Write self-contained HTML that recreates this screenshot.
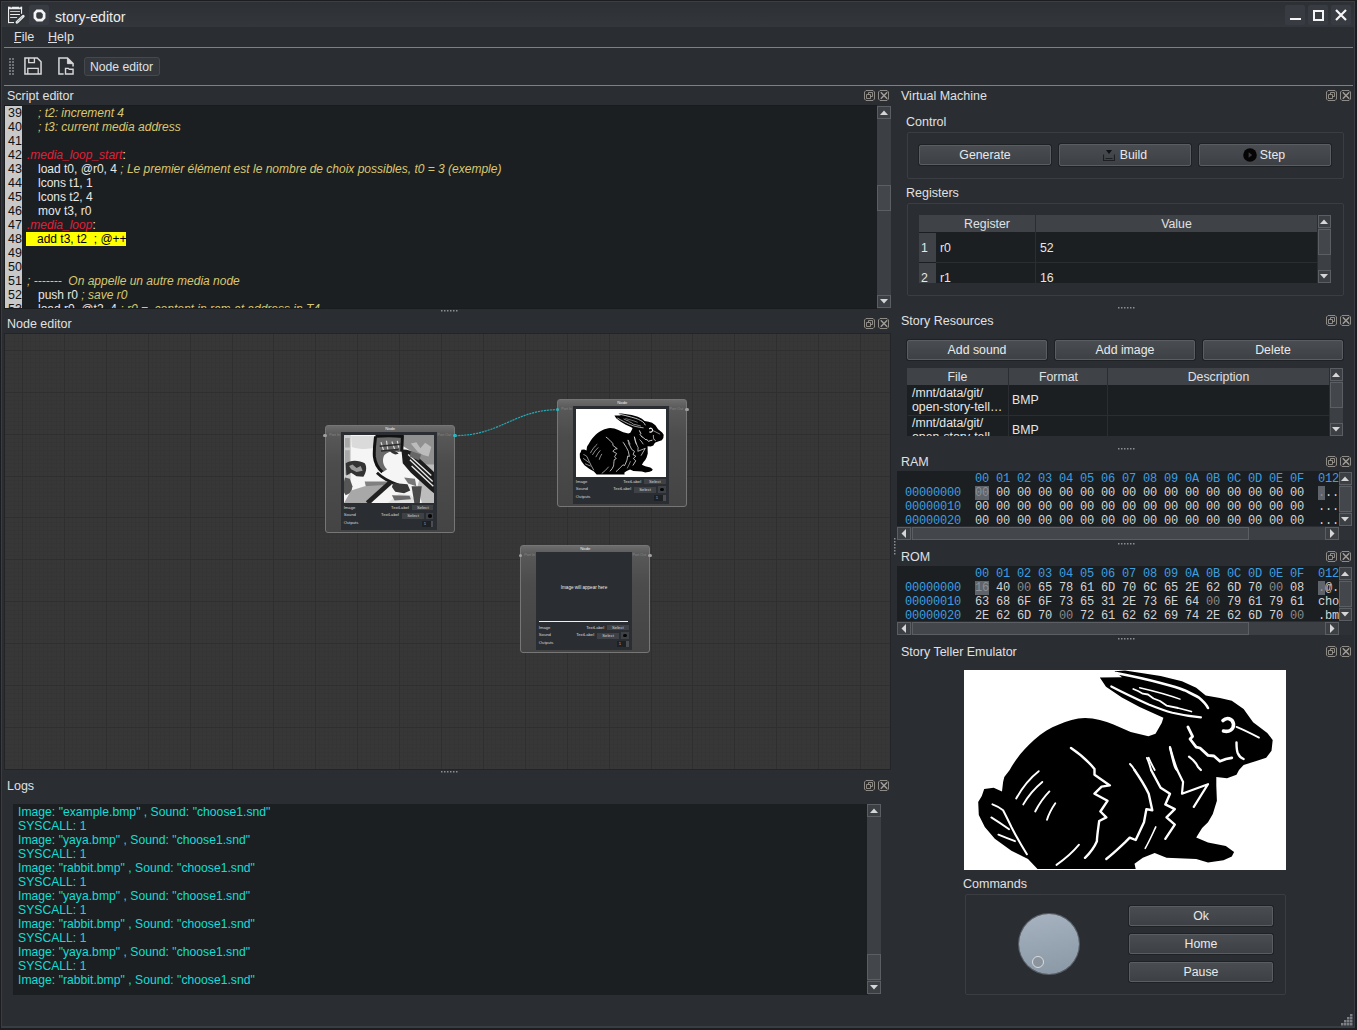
<!DOCTYPE html>
<html><head><meta charset="utf-8">
<style>
*{box-sizing:border-box;margin:0;padding:0}
html,body{width:1357px;height:1030px;overflow:hidden;background:#2a2d32}
body{position:relative;font-family:"Liberation Sans",sans-serif;font-size:13px;color:#e0e1e3}
.a{position:absolute}
.t{position:absolute;white-space:nowrap;line-height:1}
.sep{position:absolute;height:1px;background:#7d8185}
.ed{position:absolute;background:#1c1f21}
.grp{position:absolute;border:1px solid #3a3e43;border-radius:2px}
.dt{font-size:12.5px;color:#e0e1e3}
.code .t{font-size:12px;color:#e8e8e8;line-height:14px}
.code .g{font-size:12.5px;color:#111}
.c{font-style:italic;color:#d9c770}
.lb{font-style:italic;color:#e0203a}
.hl{background:#ffff00;color:#000;display:inline-block;width:100px;margin-left:-1px}
.lg{font-size:12.2px;color:#14dcd6;line-height:14px}
.btn{position:absolute;background:linear-gradient(#494d52,#3d4145);border:1px solid #5a5e63;box-shadow:0 0 0 1px #1f2225;border-radius:2px}
.bl{font-size:12.3px;color:#e8e9ea}
.th{background:#3f4348}
.hd{font-size:12.3px;color:#e0e1e3}
.cl{font-size:12.3px;color:#e6e7e8}
.hx{font-family:"Liberation Mono",monospace;font-size:12px;letter-spacing:-0.2px;color:#d4d4d4;line-height:14px}
.hb{color:#3d9ee0}
.dz{color:#8a8a8a}
.sel{background:#5f646a;color:#8a8f94}
.nd{border:1px solid #767676;border-radius:3px;background:linear-gradient(#6c6c6c 0,#585858 9px,#4c4c4c 35%,#444444 100%)}
.ndt{left:0;top:2.2px;width:130px;text-align:center;font-size:4.2px;color:#f0f0f0;line-height:1}
.nt{font-size:4.2px;color:#d8d8d8;line-height:1}
</style></head><body>
<div class="a" style="left:0;top:0;width:1357px;height:1030px;background:#1b1d20"></div>
<div class="a" style="left:1px;top:1px;width:1354px;height:1027px;background:#383d44"></div>
<div class="a" style="left:2px;top:2px;width:1352px;height:1024px;background:#2a2d32"></div>
<div class="a" style="left:2px;top:2px;width:1352px;height:25px;background:linear-gradient(#2d3136,#33373c)"></div>
<div class="a" style="left:1px;top:1px;width:1354px;height:1px;background:#3a3f46"></div>
<svg class="a" style="left:7px;top:6px" width="18" height="18" viewBox="0 0 18 18">
 <g fill="#ececec"><path d="M1 0.8h2.6v0.8h1.2V0.8h7.3v0.8h1.2V0.8H15.1v2.5H1z"/><rect x="1" y="0.8" width="1.1" height="16.3"/><rect x="1" y="16" width="6" height="1.1"/><rect x="14" y="0.8" width="1.1" height="7"/>
 <rect x="3.1" y="5.1" width="9.9" height="0.8"/><rect x="3.1" y="8" width="9.9" height="1"/><rect x="3.1" y="11.1" width="7" height="0.9"/></g>
 <path d="M10 16.2l6.2-6" stroke="#ececec" stroke-width="2.8" stroke-linecap="round"/>
 <path d="M10.6 15.6l5-4.8" stroke="#55595e" stroke-width="0.9" stroke-dasharray="0.8 0.6"/>
</svg>
<div class="a" style="left:29px;top:5px;width:20px;height:20px;background:#383c42;border-radius:2px"></div>
<svg class="a" style="left:33px;top:9px" width="13" height="13" viewBox="0 0 13 13">
 <path d="M4 1.9h4.5l2.6 2.6v4.3L8.8 11.1H4.2L1.9 8.8V4.2z" fill="none" stroke="#f4f4f4" stroke-width="2.7"/>
</svg>
<div class="t" style="left:55px;top:9.6px;font-size:14.1px;color:#eceded">story-editor</div>
<div class="a" style="left:1285px;top:5px;width:20px;height:20px;background:#383c42;border-radius:2px"></div>
<div class="a" style="left:1308px;top:5px;width:20px;height:20px;background:#383c42;border-radius:2px"></div>
<div class="a" style="left:1331px;top:5px;width:20px;height:20px;background:#383c42;border-radius:2px"></div>
<div class="a" style="left:1290px;top:18px;width:11px;height:2px;background:#f5f5f5"></div>
<div class="a" style="left:1313px;top:10px;width:11px;height:11px;border:2px solid #f5f5f5"></div>
<svg class="a" style="left:1335px;top:9px" width="12" height="12" viewBox="0 0 12 12"><path d="M1 1l10 10M11 1L1 11" stroke="#f5f5f5" stroke-width="2.2"/></svg>
<div class="t" style="left:14px;top:30.6px;font-size:12.6px">File</div>
<div class="a" style="left:14px;top:42px;width:7px;height:1px;background:#e0e1e3"></div>
<div class="t" style="left:48px;top:30.6px;font-size:12.6px">Help</div>
<div class="a" style="left:48px;top:42px;width:9px;height:1px;background:#e0e1e3"></div>
<div class="sep" style="left:4px;top:47px;width:1349px"></div>
<svg class="a" style="left:9px;top:58px" width="6" height="18" viewBox="0 0 6 18">
 <g fill="#6f7378"><rect x="0" y="0" width="2" height="2"/><rect x="3" y="0" width="2" height="2"/><rect x="0" y="3" width="2" height="2"/><rect x="3" y="3" width="2" height="2"/><rect x="0" y="6" width="2" height="2"/><rect x="3" y="6" width="2" height="2"/><rect x="0" y="9" width="2" height="2"/><rect x="3" y="9" width="2" height="2"/><rect x="0" y="12" width="2" height="2"/><rect x="3" y="12" width="2" height="2"/><rect x="0" y="15" width="2" height="2"/><rect x="3" y="15" width="2" height="2"/></g>
</svg>
<svg class="a" style="left:24px;top:57px" width="18" height="18" viewBox="0 0 19 19">
 <path d="M1 1h13l4 4v13H1z" fill="none" stroke="#d8d8d8" stroke-width="1.6"/>
 <path d="M5 1v5h6V1" fill="none" stroke="#d8d8d8" stroke-width="1.4"/>
 <path d="M4 18v-6h11v6" fill="none" stroke="#d8d8d8" stroke-width="1.4"/>
</svg>
<svg class="a" style="left:58px;top:57px" width="16" height="18" viewBox="0 0 17 19">
 <path d="M6 18H1V1h9l6 6v3" fill="none" stroke="#d8d8d8" stroke-width="1.6"/>
 <path d="M10 1v6h6" fill="#d8d8d8" stroke="#d8d8d8" stroke-width="1"/>
 <path d="M8 18v-6h3l1 1h4v5z" fill="none" stroke="#d8d8d8" stroke-width="1.5"/>
</svg>
<div class="a" style="left:84px;top:57px;width:76px;height:19px;background:#33373c;border:1px solid #45494e;border-radius:3px"></div>
<div class="t" style="left:90px;top:61px;font-size:12.2px">Node editor</div>
<div class="sep" style="left:4px;top:85px;width:1349px"></div>
<div class="t dt" style="left:7px;top:90px">Script editor</div>
<svg class="a" style="left:864px;top:90px" width="26" height="12" viewBox="0 0 26 12">
 <g fill="none" stroke="#a09c96" stroke-width="0.85"><path d="M2 .5h7l1.5 1.5v7L9 10.5H2L.5 9V2z"/><path d="M2.5 4.5H6.5V8.5H2.5Z"/><path d="M4.5 4.5V2.5H8.5V6.5H6.5"/></g>
 <g fill="none" stroke="#a09c96" stroke-width="0.85"><path d="M16 .5h7l1.5 1.5v7L23 10.5h-7L14.5 9V2z"/><path d="M16.8 2.3l6.4 6.4M23.2 2.3l-6.4 6.4" stroke-width="1.5"/></g>
</svg>
<div class="a" style="left:4px;top:105px;width:873px;height:204px;background:#191b1d"></div>
<div class="ed" style="left:5px;top:106px;width:872px;height:202px"></div>
<div class="a" style="left:5px;top:106px;width:17px;height:202px;background:#c9c9c9"></div>
<div class="a code" style="left:0;top:0;width:876px;height:308px;overflow:hidden;clip-path:inset(106px 0 0 0)">
<div class="t g" style="left:3px;top:106px;width:19px;text-align:right">39</div>
<div class="t g" style="left:3px;top:120px;width:19px;text-align:right">40</div>
<div class="t g" style="left:3px;top:134px;width:19px;text-align:right">41</div>
<div class="t g" style="left:3px;top:148px;width:19px;text-align:right">42</div>
<div class="t g" style="left:3px;top:162px;width:19px;text-align:right">43</div>
<div class="t g" style="left:3px;top:176px;width:19px;text-align:right">44</div>
<div class="t g" style="left:3px;top:190px;width:19px;text-align:right">45</div>
<div class="t g" style="left:3px;top:204px;width:19px;text-align:right">46</div>
<div class="t g" style="left:3px;top:218px;width:19px;text-align:right">47</div>
<div class="t g" style="left:3px;top:232px;width:19px;text-align:right">48</div>
<div class="t g" style="left:3px;top:246px;width:19px;text-align:right">49</div>
<div class="t g" style="left:3px;top:260px;width:19px;text-align:right">50</div>
<div class="t g" style="left:3px;top:274px;width:19px;text-align:right">51</div>
<div class="t g" style="left:3px;top:288px;width:19px;text-align:right">52</div>
<div class="t g" style="left:3px;top:302px;width:19px;text-align:right">53</div>
<div class="t" style="left:27px;top:106px"><span class="c" style="margin-left:11px">; t2: increment 4</span></div>
<div class="t" style="left:27px;top:120px"><span class="c" style="margin-left:11px">; t3: current media address</span></div>
<div class="t" style="left:27px;top:134px"></div>
<div class="t" style="left:27px;top:148px"><span class="lb">.media_loop_start</span>:</div>
<div class="t" style="left:27px;top:162px"><span style="margin-left:11px">load t0, @r0, 4 </span><span class="c">; Le premier élément est le nombre de choix possibles, t0 = 3 (exemple)</span></div>
<div class="t" style="left:27px;top:176px"><span style="margin-left:11px">lcons t1, 1</span></div>
<div class="t" style="left:27px;top:190px"><span style="margin-left:11px">lcons t2, 4</span></div>
<div class="t" style="left:27px;top:204px"><span style="margin-left:11px">mov t3, r0</span></div>
<div class="t" style="left:27px;top:218px"><span class="lb">.media_loop</span>:</div>
<div class="t" style="left:27px;top:232px"><span class="hl"><span style="margin-left:11px">add t3, t2&nbsp; ; @++</span></span></div>
<div class="t" style="left:27px;top:246px"></div>
<div class="t" style="left:27px;top:260px"></div>
<div class="t" style="left:27px;top:274px"><span class="c">; -------&nbsp; On appelle un autre media node</span></div>
<div class="t" style="left:27px;top:288px"><span style="margin-left:11px">push r0 </span><span class="c">; save r0</span></div>
<div class="t" style="left:27px;top:302px"><span style="margin-left:11px">load r0, @t2, 4 </span><span class="c">; r0 =&nbsp; content in ram at address in T4</span></div>

</div>
<div class="a" style="left:877px;top:106px;width:14px;height:202px;background:#3c4045"></div>
<div class="a" style="left:877px;top:106px;width:14px;height:13px;background:#3c4045;border:1px solid #5b5f64"></div>
<svg class="a" style="left:880px;top:110px" width="8" height="5"><path d="M0 5L4 0.5L8 5z" fill="#d6d6d6"/></svg>
<div class="a" style="left:877px;top:295px;width:14px;height:13px;background:#3c4045;border:1px solid #5b5f64"></div>
<svg class="a" style="left:880px;top:299px" width="8" height="5"><path d="M0 0L4 4.5L8 0z" fill="#d6d6d6"/></svg>
<div class="a" style="left:877px;top:185px;width:14px;height:26px;background:#43474c;border:1px solid #5b5f64"></div>
<svg class="a" style="left:441px;top:310px" width="17" height="2"><g fill="#8a8e92"><rect x="0" width="1.5" height="1.5"/><rect x="3" width="1.5" height="1.5"/><rect x="6" width="1.5" height="1.5"/><rect x="9" width="1.5" height="1.5"/><rect x="12" width="1.5" height="1.5"/><rect x="15" width="1.5" height="1.5"/></g></svg>
<div class="t dt" style="left:7px;top:318px">Node editor</div>
<svg class="a" style="left:864px;top:318px" width="26" height="12" viewBox="0 0 26 12">
 <g fill="none" stroke="#a09c96" stroke-width="0.85"><path d="M2 .5h7l1.5 1.5v7L9 10.5H2L.5 9V2z"/><path d="M2.5 4.5H6.5V8.5H2.5Z"/><path d="M4.5 4.5V2.5H8.5V6.5H6.5"/></g>
 <g fill="none" stroke="#a09c96" stroke-width="0.85"><path d="M16 .5h7l1.5 1.5v7L23 10.5h-7L14.5 9V2z"/><path d="M16.8 2.3l6.4 6.4M23.2 2.3l-6.4 6.4" stroke-width="1.5"/></g>
</svg>
<div class="a" style="left:4px;top:333px;width:887px;height:437px;background:#222427"></div>
<svg class="a" style="left:5px;top:334px" width="885" height="435">
<rect width="885" height="435" fill="#373737"/>
<path d="M9.5 0V435M13.5 0V435M21.5 0V435M25.5 0V435M30.5 0V435M34.5 0V435M38.5 0V435M42.5 0V435M46.5 0V435M51.5 0V435M55.5 0V435M63.5 0V435M67.5 0V435M71.5 0V435M76.5 0V435M80.5 0V435M84.5 0V435M88.5 0V435M92.5 0V435M97.5 0V435M105.5 0V435M109.5 0V435M113.5 0V435M118.5 0V435M122.5 0V435M126.5 0V435M130.5 0V435M134.5 0V435M139.5 0V435M147.5 0V435M151.5 0V435M155.5 0V435M159.5 0V435M164.5 0V435M168.5 0V435M172.5 0V435M176.5 0V435M180.5 0V435M189.5 0V435M193.5 0V435M197.5 0V435M201.5 0V435M206.5 0V435M210.5 0V435M214.5 0V435M218.5 0V435M222.5 0V435M231.5 0V435M235.5 0V435M239.5 0V435M243.5 0V435M247.5 0V435M252.5 0V435M256.5 0V435M260.5 0V435M264.5 0V435M273.5 0V435M277.5 0V435M281.5 0V435M285.5 0V435M289.5 0V435M294.5 0V435M298.5 0V435M302.5 0V435M306.5 0V435M314.5 0V435M319.5 0V435M323.5 0V435M327.5 0V435M331.5 0V435M335.5 0V435M340.5 0V435M344.5 0V435M348.5 0V435M356.5 0V435M361.5 0V435M365.5 0V435M369.5 0V435M373.5 0V435M377.5 0V435M382.5 0V435M386.5 0V435M390.5 0V435M398.5 0V435M402.5 0V435M407.5 0V435M411.5 0V435M415.5 0V435M419.5 0V435M423.5 0V435M428.5 0V435M432.5 0V435M440.5 0V435M444.5 0V435M449.5 0V435M453.5 0V435M457.5 0V435M461.5 0V435M465.5 0V435M470.5 0V435M474.5 0V435M482.5 0V435M486.5 0V435M490.5 0V435M495.5 0V435M499.5 0V435M503.5 0V435M507.5 0V435M511.5 0V435M516.5 0V435M524.5 0V435M528.5 0V435M532.5 0V435M537.5 0V435M541.5 0V435M545.5 0V435M549.5 0V435M553.5 0V435M558.5 0V435M566.5 0V435M570.5 0V435M574.5 0V435M578.5 0V435M583.5 0V435M587.5 0V435M591.5 0V435M595.5 0V435M599.5 0V435M608.5 0V435M612.5 0V435M616.5 0V435M620.5 0V435M625.5 0V435M629.5 0V435M633.5 0V435M637.5 0V435M641.5 0V435M650.5 0V435M654.5 0V435M658.5 0V435M662.5 0V435M666.5 0V435M671.5 0V435M675.5 0V435M679.5 0V435M683.5 0V435M692.5 0V435M696.5 0V435M700.5 0V435M704.5 0V435M708.5 0V435M713.5 0V435M717.5 0V435M721.5 0V435M725.5 0V435M733.5 0V435M738.5 0V435M742.5 0V435M746.5 0V435M750.5 0V435M754.5 0V435M759.5 0V435M763.5 0V435M767.5 0V435M775.5 0V435M780.5 0V435M784.5 0V435M788.5 0V435M792.5 0V435M796.5 0V435M801.5 0V435M805.5 0V435M809.5 0V435M817.5 0V435M821.5 0V435M826.5 0V435M830.5 0V435M834.5 0V435M838.5 0V435M842.5 0V435M847.5 0V435M851.5 0V435M859.5 0V435M863.5 0V435M868.5 0V435M872.5 0V435M876.5 0V435M880.5 0V435M884.5 0V435M0 7.5H885M0 12.5H885M0 20.5H885M0 24.5H885M0 28.5H885M0 33.5H885M0 37.5H885M0 41.5H885M0 45.5H885M0 49.5H885M0 54.5H885M0 62.5H885M0 66.5H885M0 70.5H885M0 74.5H885M0 79.5H885M0 83.5H885M0 87.5H885M0 91.5H885M0 95.5H885M0 104.5H885M0 108.5H885M0 112.5H885M0 116.5H885M0 121.5H885M0 125.5H885M0 129.5H885M0 133.5H885M0 137.5H885M0 146.5H885M0 150.5H885M0 154.5H885M0 158.5H885M0 162.5H885M0 167.5H885M0 171.5H885M0 175.5H885M0 179.5H885M0 188.5H885M0 192.5H885M0 196.5H885M0 200.5H885M0 204.5H885M0 209.5H885M0 213.5H885M0 217.5H885M0 221.5H885M0 229.5H885M0 234.5H885M0 238.5H885M0 242.5H885M0 246.5H885M0 250.5H885M0 255.5H885M0 259.5H885M0 263.5H885M0 271.5H885M0 276.5H885M0 280.5H885M0 284.5H885M0 288.5H885M0 292.5H885M0 297.5H885M0 301.5H885M0 305.5H885M0 313.5H885M0 317.5H885M0 322.5H885M0 326.5H885M0 330.5H885M0 334.5H885M0 338.5H885M0 343.5H885M0 347.5H885M0 355.5H885M0 359.5H885M0 364.5H885M0 368.5H885M0 372.5H885M0 376.5H885M0 380.5H885M0 385.5H885M0 389.5H885M0 397.5H885M0 401.5H885M0 405.5H885M0 410.5H885M0 414.5H885M0 418.5H885M0 422.5H885M0 426.5H885M0 431.5H885" stroke="#353535" stroke-width="1" fill="none"/>
<path d="M17.5 0V435M59.5 0V435M101.5 0V435M143.5 0V435M185.5 0V435M227.5 0V435M268.5 0V435M310.5 0V435M352.5 0V435M394.5 0V435M436.5 0V435M478.5 0V435M520.5 0V435M562.5 0V435M604.5 0V435M646.5 0V435M687.5 0V435M729.5 0V435M771.5 0V435M813.5 0V435M855.5 0V435M0 16.5H885M0 58.5H885M0 100.5H885M0 142.5H885M0 183.5H885M0 225.5H885M0 267.5H885M0 309.5H885M0 351.5H885M0 393.5H885" stroke="#2f2f2f" stroke-width="1" fill="none"/>
</svg>
<div class="a" style="left:325.2px;top:425.2px;width:130px;height:108px">
<div class="a nd" style="left:0;top:0;width:130px;height:108px"></div>
<div class="t ndt">Node</div>
<div class="a" style="left:16px;top:7px;width:96px;height:98px;background:#2a2d32"></div>
<div class="a" style="left:18.7px;top:9.7px;width:90px;height:68px;overflow:hidden"><svg class="a" style="left:0;top:0" width="90" height="68" viewBox="15 15 1325 1000" preserveAspectRatio="none">
<rect x="0" y="0" width="1354" height="1030" fill="#f5f5f5"/>
<path d="M15 15H115V720L15 760Z" fill="#cdcdcd"/>
<path d="M30 60H100V200H30ZM30 240H100V600H30Z" fill="#a8a8a8"/>
<path d="M120 30H470L460 200C380 230 250 230 130 190Z" fill="#dadada"/>
<path d="M880 15H1340V470L1200 450 1000 250 870 170Z" fill="#909090"/>
<path d="M950 80L1000 140 1080 120 1140 210 1210 130 1300 190 1260 330 1180 310 1100 260Z" fill="#bcbcbc"/>
<path d="M1180 450H1340V1015H1160L1100 760Z" fill="#bdbdbd"/>
<path d="M480 30C600 18 760 18 880 35L870 250 820 265C740 240 660 260 610 310C570 380 590 470 650 520L590 560C520 500 480 420 465 330C455 230 455 120 480 30Z" fill="#6a6a6a"/>
<path d="M480 35C470 120 455 220 462 330C470 420 510 500 580 560M480 35C600 22 760 22 875 38L865 260" stroke="#111" stroke-width="44" fill="none"/>
<path d="M560 120L600 250M640 100L660 230M720 110L760 220M800 100L820 200" stroke="#d8d8d8" stroke-width="18" fill="none"/>
<path d="M540 180L850 150M560 250L820 230" stroke="#2a2a2a" stroke-width="22" fill="none"/>
<path d="M690 245C740 240 790 255 820 290L770 300C730 290 705 270 690 245Z" fill="#333"/>
<path d="M860 230C930 220 1000 240 1040 280L1340 560V870L1290 830 1000 570 880 430Z" fill="#1c1c1c"/>
<path d="M960 300L1300 610M985 380L1320 700M1010 470L1330 770" stroke="#e8e8e8" stroke-width="20" fill="none"/>
<path d="M1000 250L1150 300 1120 390 980 330Z" fill="#666"/>
<path d="M500 570C580 650 700 710 820 750" stroke="#1a1a1a" stroke-width="40" fill="none"/>
<path d="M40 430C100 380 240 380 320 430C360 490 340 570 300 630L200 620 120 570 50 610Z" fill="#333"/>
<path d="M90 470L140 450 200 500 260 470 290 540 200 560 120 520Z" fill="#999"/>
<path d="M30 640L100 660 140 770 120 860 40 900 15 860V700Z" fill="#555"/>
<path d="M320 700H640L700 760 520 790 340 790Z" fill="#808080"/>
<path d="M15 1015L120 830 320 770 600 750 420 1015Z" fill="#a8a8a8"/>
<path d="M360 1015L700 710" stroke="#222" stroke-width="70" fill="none"/>
<path d="M740 720L950 740 990 830 900 870 770 850 720 780Z" fill="#383838"/>
<path d="M660 1015L820 880 1000 900 1100 1015Z" fill="#e0e0e0"/>
<path d="M720 900L980 910 1000 960 760 980Z" fill="#6a6a6a"/>
<path d="M900 640L1060 660 1080 770 960 730Z" fill="#777"/>
<path d="M1010 770L1160 770 1130 1015H1050Z" fill="#4a4a4a"/>
</svg></div>
<div class="t nt" style="left:4px;top:8.8px;color:#888;font-size:3.7px">Port In</div>
<div class="t nt" style="right:4px;top:8.8px;color:#888;font-size:3.7px">Port Out</div>
<div class="t nt" style="left:18.5px;top:80.5px">Image</div>
<div class="t nt" style="right:46.2px;top:80.8px">TextLabel</div>
<div class="a" style="left:86.8px;top:79.8px;width:21.5px;height:5.3px;background:#3e4247"></div>
<div class="t nt" style="left:86.8px;top:80.5px;width:21.5px;text-align:center">Select</div>
<div class="t nt" style="left:18.5px;top:87.5px">Sound</div>
<div class="t nt" style="right:56.2px;top:88.2px">TextLabel</div>
<div class="a" style="left:76.8px;top:87.6px;width:22px;height:6px;background:#3e4247"></div>
<div class="t nt" style="left:76.8px;top:88.6px;width:22px;text-align:center">Select</div>
<div class="a" style="left:100.8px;top:87.4px;width:7.5px;height:6.4px;background:#3e4247"></div>
<div class="a" style="left:102.8px;top:89px;width:3.6px;height:3.4px;border-radius:50%;background:#050505"></div>
<div class="t nt" style="left:18.5px;top:96.3px">Outputs</div>
<div class="a" style="left:97.1px;top:95.5px;width:11.2px;height:6.3px;background:#1e2124"></div>
<div class="t nt" style="left:98.5px;top:96.8px;color:#aaa">1</div>
<div class="a" style="left:105.5px;top:95.5px;width:2.8px;height:6.3px;background:#4a4e53"></div>
<div class="a" style="left:-1.8px;top:8.6px;width:3.6px;height:3.6px;border-radius:50%;background:#a0a0a0"></div>
<div class="a" style="left:128.2px;top:8.6px;width:3.6px;height:3.6px;border-radius:50%;background:#2ac0c8"></div>
</div><div class="a" style="left:557.3px;top:399.1px;width:130px;height:108px">
<div class="a nd" style="left:0;top:0;width:130px;height:108px"></div>
<div class="t ndt">Node</div>
<div class="a" style="left:16px;top:7px;width:96px;height:98px;background:#2a2d32"></div>
<div class="a" style="left:18.7px;top:9.7px;width:90px;height:68px;overflow:hidden"><div class="a" style="left:0;top:0;width:90px;height:68px;background:#fff"></div><svg class="a" style="left:0;top:0" width="90" height="68" viewBox="0 0 90 68"><g transform="translate(-0.3,4.2) scale(0.285,0.308)"><path d="M73.5 199 L64 189 L47.4 180.7 L30.8 168.8 L20.8 157 L14.8 145 L14.2 132 L17.8 126 L20.2 119 L29.7 117.8 L38 121.4 L39.1 112 L40.3 107 L45.7 100
C53 87 61 78 70 70 C78 63 86 58 94.9 54.6 C103 51 112 48.2 121 48 C131 48 141 51 149.5 54.6 L166.7 61.9 L184.4 66.3 L191.5 63.7 L197.7 53 L199.4 47.7
L193.3 45.1 L175.6 37.1 L157.9 27.4 L142 16.8 L135.8 7.5 L158 7.3 L150.5 1.3 L161 0.6 L196.6 5.9 L218 11.3 L232.2 17.8 L241.7 25.5
L255.9 27.9 L267.8 30.8 L279.6 39.1 L289.1 52.2 L303.3 62.9 L308.7 70 L307.5 80.7 L302.2 87.8 L291.5 91.3 L279.6 94.9 L275 100 L272.5 104.7 L263 108.3 L252.3 107.1
L252.3 115.4 L252.9 130.8 L248.8 143.9 L244 152.2 L238.1 158.1 L232.2 167.6 L244 172.4 L261.8 175.9 L270.1 181.9 L267.8 186.6 L259.5 190.2 L244 192.5 L232.2 189 L202.5 187.8 L190.7 183 L178.8 187.8 L170.5 193.7 L171.7 199 Z" fill="#000"/><path d="M152 3 C165 5.5 182 9 196.6 13 C208 16 215 18 220.3 20.2 C226 23 231 25 234.5 27.3 C239 31 242 34 244 38" fill="none" stroke="#fff" stroke-width="2.6" stroke-linecap="round" stroke-linejoin="round"/><path d="M147.3 16.4 C160 23 175 30 184.7 34.4 C195 38.5 202 41 208.4 42.7 C220 45.5 228 46.5 236.9 47.4" fill="none" stroke="#fff" stroke-width="2.2" stroke-linecap="round" stroke-linejoin="round"/><path d="M169.3 19 L174 21 L178.8 23.7 L184 24.5 L189.5 28.5 L196 31 L202.5 35.6 L214 38 L227.4 41.5" fill="none" stroke="#fff" stroke-width="1.8" stroke-linecap="round" stroke-linejoin="round"/><path d="M175.6 17.7 C190 21 205 25 216 29.2" fill="none" stroke="#fff" stroke-width="1.4" stroke-linecap="round" stroke-linejoin="round"/><path d="M259 50.5 C262.5 47 268.5 48 269.5 54 C270 59.5 265 62.5 259.5 61" fill="none" stroke="#fff" stroke-width="3.6" stroke-linecap="round" stroke-linejoin="round"/><path d="M272.5 56.9 C280 60 288 64 295 67.6" fill="none" stroke="#fff" stroke-width="1.8" stroke-linecap="round" stroke-linejoin="round"/><path d="M272.5 72.4 C272.5 77 273 81 273.7 83 C275 86 277 88 279.6 89" fill="none" stroke="#fff" stroke-width="2.4" stroke-linecap="round" stroke-linejoin="round"/><path d="M223.9 56.9 L228.6 66.4 L226 69 L232.2 77.1 L236 78 L244 85.4 L250 86 L255.9 91.3 L262 89 L267.8 87.8" fill="none" stroke="#fff" stroke-width="2.8" stroke-linecap="round" stroke-linejoin="round"/><path d="M225 86.6 L229 90 L232.2 93.7 L234 97 L236.9 100" fill="none" stroke="#fff" stroke-width="2.2" stroke-linecap="round" stroke-linejoin="round"/><path d="M206 77.1 C208 84 210 92 213.2 100" fill="none" stroke="#fff" stroke-width="2.2" stroke-linecap="round" stroke-linejoin="round"/><path d="M184.7 87.8 C186.5 92 188.5 96 190.7 100" fill="none" stroke="#fff" stroke-width="1.8" stroke-linecap="round" stroke-linejoin="round"/><path d="M107 78 C116 84 124 91 130.5 99 L130.5 104.7 L145.9 115.4 L137.6 116.6 L130.5 123.7 L143.5 130.8 L136.4 141.5 L142.3 147.4 L135.2 151 C134 160 133 166 132.9 171.2 C130 178 126 183 121 187.8" fill="none" stroke="#fff" stroke-width="2.4" stroke-linecap="round" stroke-linejoin="round"/><path d="M170.5 100 C176 108 181 116 184.7 123.7 L188.3 140.3 L182.4 139.1 L180 152.2 L171.7 170 L165.7 167.6 L161 172.4 C155 178 150 183 142.3 189" fill="none" stroke="#fff" stroke-width="2.4" stroke-linecap="round" stroke-linejoin="round"/><path d="M166 94 C168 96 169.5 98 170.5 100" fill="none" stroke="#fff" stroke-width="2.0" stroke-linecap="round" stroke-linejoin="round"/><path d="M187.1 100 L196.6 117.8 L206 123.7 L201.3 134.4 L210.8 139.1 L202.5 147.4 L210.8 154.6 L201.3 168.8" fill="none" stroke="#fff" stroke-width="2.4" stroke-linecap="round" stroke-linejoin="round"/><path d="M183 88 C185 92 186 96 187.1 100" fill="none" stroke="#fff" stroke-width="2.0" stroke-linecap="round" stroke-linejoin="round"/><path d="M191.8 156.9 C188 165 185 172 181.2 178.3" fill="none" stroke="#fff" stroke-width="1.6" stroke-linecap="round" stroke-linejoin="round"/><path d="M206 78 C209 90 211 100 213.2 100 L219.1 111.9 L218 123.7 L244 114.2 L229.8 136.8" fill="none" stroke="#fff" stroke-width="2.2" stroke-linecap="round" stroke-linejoin="round"/><path d="M52.2 128.5 C58 118 66 108 74.7 101.2" fill="none" stroke="#fff" stroke-width="1.9" stroke-linecap="round" stroke-linejoin="round"/><path d="M59.3 134.4 C64 126 71 118 78.3 111.9" fill="none" stroke="#fff" stroke-width="1.9" stroke-linecap="round" stroke-linejoin="round"/><path d="M71.2 141.5 C75 134 80 127 85.4 121.4" fill="none" stroke="#fff" stroke-width="1.9" stroke-linecap="round" stroke-linejoin="round"/><path d="M83 149.8 C85 143 88 138 91.3 133.2" fill="none" stroke="#fff" stroke-width="1.9" stroke-linecap="round" stroke-linejoin="round"/><path d="M28.5 134.4 C33 136 36 138 39.1 140.3 C42 146 45 152 47.4 157 C52 166 57 175 62.9 184.2" fill="none" stroke="#fff" stroke-width="2.0" stroke-linecap="round" stroke-linejoin="round"/><path d="M27.3 147.4 C33 151 39 155 45.1 159.3" fill="none" stroke="#fff" stroke-width="1.9" stroke-linecap="round" stroke-linejoin="round"/><path d="M34.4 164.7 C40 167 45 169 51 171.2" fill="none" stroke="#fff" stroke-width="1.9" stroke-linecap="round" stroke-linejoin="round"/><path d="M92.5 194.9 C101 189 109 182 115 174.7" fill="none" stroke="#fff" stroke-width="1.9" stroke-linecap="round" stroke-linejoin="round"/></g></svg></div>
<div class="t nt" style="left:4px;top:8.8px;color:#888;font-size:3.7px">Port In</div>
<div class="t nt" style="right:4px;top:8.8px;color:#888;font-size:3.7px">Port Out</div>
<div class="t nt" style="left:18.5px;top:80.5px">Image</div>
<div class="t nt" style="right:46.2px;top:80.8px">TextLabel</div>
<div class="a" style="left:86.8px;top:79.8px;width:21.5px;height:5.3px;background:#3e4247"></div>
<div class="t nt" style="left:86.8px;top:80.5px;width:21.5px;text-align:center">Select</div>
<div class="t nt" style="left:18.5px;top:87.5px">Sound</div>
<div class="t nt" style="right:56.2px;top:88.2px">TextLabel</div>
<div class="a" style="left:76.8px;top:87.6px;width:22px;height:6px;background:#3e4247"></div>
<div class="t nt" style="left:76.8px;top:88.6px;width:22px;text-align:center">Select</div>
<div class="a" style="left:100.8px;top:87.4px;width:7.5px;height:6.4px;background:#3e4247"></div>
<div class="a" style="left:102.8px;top:89px;width:3.6px;height:3.4px;border-radius:50%;background:#050505"></div>
<div class="t nt" style="left:18.5px;top:96.3px">Outputs</div>
<div class="a" style="left:97.1px;top:95.5px;width:11.2px;height:6.3px;background:#1e2124"></div>
<div class="t nt" style="left:98.5px;top:96.8px;color:#aaa">1</div>
<div class="a" style="left:105.5px;top:95.5px;width:2.8px;height:6.3px;background:#4a4e53"></div>
<div class="a" style="left:-1.8px;top:8.6px;width:3.6px;height:3.6px;border-radius:50%;background:#2ac0c8"></div>
<div class="a" style="left:128.2px;top:8.6px;width:3.6px;height:3.6px;border-radius:50%;background:#a0a0a0"></div>
</div><div class="a" style="left:520.3px;top:545.0px;width:130px;height:108px">
<div class="a nd" style="left:0;top:0;width:130px;height:108px"></div>
<div class="t ndt">Node</div>
<div class="a" style="left:16px;top:7px;width:96px;height:98px;background:#2a2d32"></div>
<div class="a" style="left:18.7px;top:9.7px;width:90px;height:68px;overflow:hidden"><div class="a" style="left:-3px;top:-3px;width:96px;height:72px;background:#2a2d32"></div><div class="t nt" style="left:0;top:31.5px;width:90px;text-align:center;color:#ececec;font-size:4.6px">Image will appear here</div><div class="a" style="left:0.5px;top:66.3px;width:89px;height:1.2px;background:#f0f0f0"></div></div>
<div class="t nt" style="left:4px;top:8.8px;color:#888;font-size:3.7px">Port In</div>
<div class="t nt" style="right:4px;top:8.8px;color:#888;font-size:3.7px">Port Out</div>
<div class="t nt" style="left:18.5px;top:80.5px">Image</div>
<div class="t nt" style="right:46.2px;top:80.8px">TextLabel</div>
<div class="a" style="left:86.8px;top:79.8px;width:21.5px;height:5.3px;background:#3e4247"></div>
<div class="t nt" style="left:86.8px;top:80.5px;width:21.5px;text-align:center">Select</div>
<div class="t nt" style="left:18.5px;top:87.5px">Sound</div>
<div class="t nt" style="right:56.2px;top:88.2px">TextLabel</div>
<div class="a" style="left:76.8px;top:87.6px;width:22px;height:6px;background:#3e4247"></div>
<div class="t nt" style="left:76.8px;top:88.6px;width:22px;text-align:center">Select</div>
<div class="a" style="left:100.8px;top:87.4px;width:7.5px;height:6.4px;background:#3e4247"></div>
<div class="a" style="left:102.8px;top:89px;width:3.6px;height:3.4px;border-radius:50%;background:#050505"></div>
<div class="t nt" style="left:18.5px;top:96.3px">Outputs</div>
<div class="a" style="left:97.1px;top:95.5px;width:11.2px;height:6.3px;background:#1e2124"></div>
<div class="t nt" style="left:98.5px;top:96.8px;color:#aaa">1</div>
<div class="a" style="left:105.5px;top:95.5px;width:2.8px;height:6.3px;background:#4a4e53"></div>
<div class="a" style="left:-1.8px;top:8.6px;width:3.6px;height:3.6px;border-radius:50%;background:#a0a0a0"></div>
<div class="a" style="left:128.2px;top:8.6px;width:3.6px;height:3.6px;border-radius:50%;background:#a0a0a0"></div>
</div><svg class="a" style="left:0;top:0" width="891" height="770"><path d="M455 435.6 C500 435.6 515 409.7 557.5 409.7" fill="none" stroke="#23aab4" stroke-width="1.2" stroke-dasharray="2.2 0.8"/></svg>
<svg class="a" style="left:441px;top:771px" width="17" height="2"><g fill="#8a8e92"><rect x="0" width="1.5" height="1.5"/><rect x="3" width="1.5" height="1.5"/><rect x="6" width="1.5" height="1.5"/><rect x="9" width="1.5" height="1.5"/><rect x="12" width="1.5" height="1.5"/><rect x="15" width="1.5" height="1.5"/></g></svg>
<div class="t dt" style="left:7px;top:780px">Logs</div>
<svg class="a" style="left:864px;top:780px" width="26" height="12" viewBox="0 0 26 12">
 <g fill="none" stroke="#a09c96" stroke-width="0.85"><path d="M2 .5h7l1.5 1.5v7L9 10.5H2L.5 9V2z"/><path d="M2.5 4.5H6.5V8.5H2.5Z"/><path d="M4.5 4.5V2.5H8.5V6.5H6.5"/></g>
 <g fill="none" stroke="#a09c96" stroke-width="0.85"><path d="M16 .5h7l1.5 1.5v7L23 10.5h-7L14.5 9V2z"/><path d="M16.8 2.3l6.4 6.4M23.2 2.3l-6.4 6.4" stroke-width="1.5"/></g>
</svg>
<div class="ed" style="left:13px;top:804px;width:855px;height:191px"></div>
<div class="t lg" style="left:18px;top:805px">Image: &quot;example.bmp&quot; , Sound: &quot;choose1.snd&quot;</div>
<div class="t lg" style="left:18px;top:819px">SYSCALL: 1</div>
<div class="t lg" style="left:18px;top:833px">Image: &quot;yaya.bmp&quot; , Sound: &quot;choose1.snd&quot;</div>
<div class="t lg" style="left:18px;top:847px">SYSCALL: 1</div>
<div class="t lg" style="left:18px;top:861px">Image: &quot;rabbit.bmp&quot; , Sound: &quot;choose1.snd&quot;</div>
<div class="t lg" style="left:18px;top:875px">SYSCALL: 1</div>
<div class="t lg" style="left:18px;top:889px">Image: &quot;yaya.bmp&quot; , Sound: &quot;choose1.snd&quot;</div>
<div class="t lg" style="left:18px;top:903px">SYSCALL: 1</div>
<div class="t lg" style="left:18px;top:917px">Image: &quot;rabbit.bmp&quot; , Sound: &quot;choose1.snd&quot;</div>
<div class="t lg" style="left:18px;top:931px">SYSCALL: 1</div>
<div class="t lg" style="left:18px;top:945px">Image: &quot;yaya.bmp&quot; , Sound: &quot;choose1.snd&quot;</div>
<div class="t lg" style="left:18px;top:959px">SYSCALL: 1</div>
<div class="t lg" style="left:18px;top:973px">Image: &quot;rabbit.bmp&quot; , Sound: &quot;choose1.snd&quot;</div>

<div class="a" style="left:867px;top:804px;width:14px;height:190px;background:#3c4045"></div>
<div class="a" style="left:867px;top:804px;width:14px;height:13px;background:#3c4045;border:1px solid #5b5f64"></div>
<svg class="a" style="left:870px;top:808px" width="8" height="5"><path d="M0 5L4 0.5L8 5z" fill="#d6d6d6"/></svg>
<div class="a" style="left:867px;top:981px;width:14px;height:13px;background:#3c4045;border:1px solid #5b5f64"></div>
<svg class="a" style="left:870px;top:985px" width="8" height="5"><path d="M0 0L4 4.5L8 0z" fill="#d6d6d6"/></svg>
<div class="a" style="left:867px;top:954px;width:14px;height:26px;background:#43474c;border:1px solid #5b5f64"></div>
<svg class="a" style="left:894px;top:538px" width="2" height="17"><g fill="#8a8e92"><rect y="0" width="1.5" height="1.5"/><rect y="3" width="1.5" height="1.5"/><rect y="6" width="1.5" height="1.5"/><rect y="9" width="1.5" height="1.5"/><rect y="12" width="1.5" height="1.5"/><rect y="15" width="1.5" height="1.5"/></g></svg>
<div class="t dt" style="left:901px;top:90px">Virtual Machine</div>
<svg class="a" style="left:1326px;top:90px" width="26" height="12" viewBox="0 0 26 12">
 <g fill="none" stroke="#a09c96" stroke-width="0.85"><path d="M2 .5h7l1.5 1.5v7L9 10.5H2L.5 9V2z"/><path d="M2.5 4.5H6.5V8.5H2.5Z"/><path d="M4.5 4.5V2.5H8.5V6.5H6.5"/></g>
 <g fill="none" stroke="#a09c96" stroke-width="0.85"><path d="M16 .5h7l1.5 1.5v7L23 10.5h-7L14.5 9V2z"/><path d="M16.8 2.3l6.4 6.4M23.2 2.3l-6.4 6.4" stroke-width="1.5"/></g>
</svg>
<div class="t dt" style="left:906px;top:116px">Control</div>
<div class="grp" style="left:907px;top:132px;width:437px;height:47px"></div>
<div class="btn" style="left:919px;top:145px;width:132px;height:20px"></div>
<div class="t bl" style="left:919px;top:149px;width:132px;text-align:center">Generate</div>
<div class="btn" style="left:1059px;top:144px;width:132px;height:22px"></div>
<div class="t bl" style="left:1059px;top:149px;width:132px;text-align:center"><svg style="vertical-align:-2px;margin-right:5px" width="12" height="11" viewBox="0 0 12 11"><path d="M.5 4.5v6h11v-6" fill="none" stroke="#1d1f22" stroke-width="1.2"/><path d="M3 0h6L6 4z" fill="#111"/><path d="M2.5 8.5h7" stroke="#1d1f22"/></svg>Build</div>
<div class="btn" style="left:1199px;top:144px;width:132px;height:22px"></div>
<div class="t bl" style="left:1199px;top:148px;width:132px;text-align:center"><svg style="vertical-align:-3px;margin-right:3px;margin-left:-2px;position:relative;top:0px" width="14" height="14" viewBox="0 0 14 14"><circle cx="7" cy="7" r="6.8" fill="#050505"/><path d="M5.6 4.2l3.6 2.8-3.6 2.8z" fill="#3c3c3c"/></svg>Step</div>
<div class="t dt" style="left:906px;top:187px">Registers</div>
<div class="grp" style="left:907px;top:203px;width:437px;height:93px"></div>
<div class="ed" style="left:919px;top:215px;width:398px;height:68px"></div>
<div class="a th" style="left:919px;top:215px;width:398px;height:17px"></div>
<div class="a" style="left:1035px;top:215px;width:1px;height:68px;background:#2a2d31"></div>
<div class="t hd" style="left:919px;top:218px;width:136px;text-align:center">Register</div>
<div class="t hd" style="left:1036px;top:218px;width:281px;text-align:center">Value</div>
<div class="a th" style="left:919px;top:233px;width:17px;height:29px"></div>
<div class="a th" style="left:919px;top:263px;width:17px;height:20px"></div>
<div class="a" style="left:936px;top:262px;width:381px;height:1px;background:#2a2d31"></div>
<div class="t cl" style="left:921px;top:242px">1</div>
<div class="t cl" style="left:940px;top:242px">r0</div>
<div class="t cl" style="left:1040px;top:242px">52</div>
<div class="t cl" style="left:921px;top:272px">2</div>
<div class="t cl" style="left:940px;top:272px">r1</div>
<div class="t cl" style="left:1040px;top:272px">16</div>
<div class="a" style="left:1318px;top:215px;width:13px;height:68px;background:#3c4045"></div>
<div class="a" style="left:1318px;top:215px;width:13px;height:13px;background:#3c4045;border:1px solid #5b5f64"></div>
<svg class="a" style="left:1320px;top:219px" width="8" height="5"><path d="M0 5L4 0.5L8 5z" fill="#d6d6d6"/></svg>
<div class="a" style="left:1318px;top:270px;width:13px;height:13px;background:#3c4045;border:1px solid #5b5f64"></div>
<svg class="a" style="left:1320px;top:274px" width="8" height="5"><path d="M0 0L4 4.5L8 0z" fill="#d6d6d6"/></svg>
<div class="a" style="left:1318px;top:229px;width:13px;height:26px;background:#43474c;border:1px solid #5b5f64"></div>
<svg class="a" style="left:1118px;top:307px" width="17" height="2"><g fill="#8a8e92"><rect x="0" width="1.5" height="1.5"/><rect x="3" width="1.5" height="1.5"/><rect x="6" width="1.5" height="1.5"/><rect x="9" width="1.5" height="1.5"/><rect x="12" width="1.5" height="1.5"/><rect x="15" width="1.5" height="1.5"/></g></svg>
<div class="t dt" style="left:901px;top:315px">Story Resources</div>
<svg class="a" style="left:1326px;top:315px" width="26" height="12" viewBox="0 0 26 12">
 <g fill="none" stroke="#a09c96" stroke-width="0.85"><path d="M2 .5h7l1.5 1.5v7L9 10.5H2L.5 9V2z"/><path d="M2.5 4.5H6.5V8.5H2.5Z"/><path d="M4.5 4.5V2.5H8.5V6.5H6.5"/></g>
 <g fill="none" stroke="#a09c96" stroke-width="0.85"><path d="M16 .5h7l1.5 1.5v7L23 10.5h-7L14.5 9V2z"/><path d="M16.8 2.3l6.4 6.4M23.2 2.3l-6.4 6.4" stroke-width="1.5"/></g>
</svg>
<div class="btn" style="left:907px;top:340px;width:140px;height:20px"></div>
<div class="t bl" style="left:907px;top:344px;width:140px;text-align:center">Add sound</div>
<div class="btn" style="left:1055px;top:340px;width:140px;height:20px"></div>
<div class="t bl" style="left:1055px;top:344px;width:140px;text-align:center">Add image</div>
<div class="btn" style="left:1203px;top:340px;width:140px;height:20px"></div>
<div class="t bl" style="left:1203px;top:344px;width:140px;text-align:center">Delete</div>
<div class="ed" style="left:907px;top:368px;width:422px;height:68px"></div>
<div class="a th" style="left:907px;top:368px;width:422px;height:17px"></div>
<div class="a" style="left:1008px;top:368px;width:1px;height:68px;background:#2a2d31"></div>
<div class="a" style="left:1107px;top:368px;width:1px;height:68px;background:#2a2d31"></div>
<div class="a" style="left:908px;top:415px;width:421px;height:1px;background:#2a2d31"></div>
<div class="t hd" style="left:907px;top:371px;width:101px;text-align:center">File</div>
<div class="t hd" style="left:1009px;top:371px;width:99px;text-align:center">Format</div>
<div class="t hd" style="left:1108px;top:371px;width:221px;text-align:center">Description</div>
<div class="a" style="left:907px;top:368px;width:422px;height:68px;overflow:hidden">
<div class="t cl" style="left:5px;top:19px">/mnt/data/git/</div>
<div class="t cl" style="left:5px;top:33px">open-story-tell…</div>
<div class="t cl" style="left:105px;top:26px">BMP</div>
<div class="t cl" style="left:5px;top:49px">/mnt/data/git/</div>
<div class="t cl" style="left:5px;top:63px">open-story-tell…</div>
<div class="t cl" style="left:105px;top:56px">BMP</div>
</div>
<div class="a" style="left:1330px;top:368px;width:13px;height:68px;background:#3c4045"></div>
<div class="a" style="left:1330px;top:368px;width:13px;height:13px;background:#3c4045;border:1px solid #5b5f64"></div>
<svg class="a" style="left:1332px;top:372px" width="8" height="5"><path d="M0 5L4 0.5L8 5z" fill="#d6d6d6"/></svg>
<div class="a" style="left:1330px;top:423px;width:13px;height:13px;background:#3c4045;border:1px solid #5b5f64"></div>
<svg class="a" style="left:1332px;top:427px" width="8" height="5"><path d="M0 0L4 4.5L8 0z" fill="#d6d6d6"/></svg>
<div class="a" style="left:1330px;top:382px;width:13px;height:26px;background:#43474c;border:1px solid #5b5f64"></div>
<svg class="a" style="left:1118px;top:448px" width="17" height="2"><g fill="#8a8e92"><rect x="0" width="1.5" height="1.5"/><rect x="3" width="1.5" height="1.5"/><rect x="6" width="1.5" height="1.5"/><rect x="9" width="1.5" height="1.5"/><rect x="12" width="1.5" height="1.5"/><rect x="15" width="1.5" height="1.5"/></g></svg>
<div class="t dt" style="left:901px;top:456px">RAM</div>
<svg class="a" style="left:1326px;top:456px" width="26" height="12" viewBox="0 0 26 12">
 <g fill="none" stroke="#a09c96" stroke-width="0.85"><path d="M2 .5h7l1.5 1.5v7L9 10.5H2L.5 9V2z"/><path d="M2.5 4.5H6.5V8.5H2.5Z"/><path d="M4.5 4.5V2.5H8.5V6.5H6.5"/></g>
 <g fill="none" stroke="#a09c96" stroke-width="0.85"><path d="M16 .5h7l1.5 1.5v7L23 10.5h-7L14.5 9V2z"/><path d="M16.8 2.3l6.4 6.4M23.2 2.3l-6.4 6.4" stroke-width="1.5"/></g>
</svg>
<div class="ed" style="left:897px;top:471px;width:442px;height:55px"></div>
<div class="t hx hb" style="left:975px;top:472px">00 01 02 03 04 05 06 07 08 09 0A 0B 0C 0D 0E 0F</div>
<div class="t hx hb" style="left:1318px;top:472px">012</div>
<div class="t hx hb" style="left:905px;top:486px">00000000</div>
<div class="t hx" style="left:975px;top:486px"><span class="sel">00</span> 00 00 00 00 00 00 00 00 00 00 00 00 00 00 00</div>
<div class="t hx" style="left:1318px;top:486px"><span class="sel">.</span>..</div>
<div class="t hx hb" style="left:905px;top:500px">00000010</div>
<div class="t hx" style="left:975px;top:500px">00 00 00 00 00 00 00 00 00 00 00 00 00 00 00 00</div>
<div class="t hx" style="left:1318px;top:500px">...</div>
<div class="t hx hb" style="left:905px;top:514px">00000020</div>
<div class="t hx" style="left:975px;top:514px">00 00 00 00 00 00 00 00 00 00 00 00 00 00 00 00</div>
<div class="t hx" style="left:1318px;top:514px">...</div>

<div class="a" style="left:1339px;top:472px;width:13px;height:54px;background:#3c4045"></div>
<div class="a" style="left:1339px;top:472px;width:13px;height:13px;background:#3c4045;border:1px solid #5b5f64"></div>
<svg class="a" style="left:1341px;top:476px" width="8" height="5"><path d="M0 5L4 0.5L8 5z" fill="#d6d6d6"/></svg>
<div class="a" style="left:1339px;top:513px;width:13px;height:13px;background:#3c4045;border:1px solid #5b5f64"></div>
<svg class="a" style="left:1341px;top:517px" width="8" height="5"><path d="M0 0L4 4.5L8 0z" fill="#d6d6d6"/></svg>
<div class="a" style="left:1339px;top:486px;width:13px;height:26px;background:#43474c;border:1px solid #5b5f64"></div>
<div class="a" style="left:897px;top:527px;width:442px;height:13px;background:#3c4045"></div>
<div class="a" style="left:897px;top:527px;width:14px;height:13px;background:#3c4045;border:1px solid #5b5f64"></div>
<svg class="a" style="left:901px;top:529px" width="5" height="9"><path d="M5 0L0.5 4.5L5 9z" fill="#d6d6d6"/></svg>
<div class="a" style="left:1325px;top:527px;width:14px;height:13px;background:#3c4045;border:1px solid #5b5f64"></div>
<svg class="a" style="left:1330px;top:529px" width="5" height="9"><path d="M0 0L4.5 4.5L0 9z" fill="#d6d6d6"/></svg>
<div class="a" style="left:912px;top:527px;width:337px;height:13px;background:#43474c;border:1px solid #5b5f64"></div>
<div class="a" style="left:1339px;top:527px;width:13px;height:13px;background:#2e3236"></div>
<svg class="a" style="left:1118px;top:543px" width="17" height="2"><g fill="#8a8e92"><rect x="0" width="1.5" height="1.5"/><rect x="3" width="1.5" height="1.5"/><rect x="6" width="1.5" height="1.5"/><rect x="9" width="1.5" height="1.5"/><rect x="12" width="1.5" height="1.5"/><rect x="15" width="1.5" height="1.5"/></g></svg>
<div class="t dt" style="left:901px;top:551px">ROM</div>
<svg class="a" style="left:1326px;top:551px" width="26" height="12" viewBox="0 0 26 12">
 <g fill="none" stroke="#a09c96" stroke-width="0.85"><path d="M2 .5h7l1.5 1.5v7L9 10.5H2L.5 9V2z"/><path d="M2.5 4.5H6.5V8.5H2.5Z"/><path d="M4.5 4.5V2.5H8.5V6.5H6.5"/></g>
 <g fill="none" stroke="#a09c96" stroke-width="0.85"><path d="M16 .5h7l1.5 1.5v7L23 10.5h-7L14.5 9V2z"/><path d="M16.8 2.3l6.4 6.4M23.2 2.3l-6.4 6.4" stroke-width="1.5"/></g>
</svg>
<div class="ed" style="left:897px;top:566px;width:442px;height:55px"></div>
<div class="t hx hb" style="left:975px;top:567px">00 01 02 03 04 05 06 07 08 09 0A 0B 0C 0D 0E 0F</div>
<div class="t hx hb" style="left:1318px;top:567px">012</div>
<div class="t hx hb" style="left:905px;top:581px">00000000</div>
<div class="t hx" style="left:975px;top:581px"><span class="sel">16</span> 40 <span class="dz">00</span> 65 78 61 6D 70 6C 65 2E 62 6D 70 <span class="dz">00</span> 08</div>
<div class="t hx" style="left:1318px;top:581px"><span class="sel">.</span>@.</div>
<div class="t hx hb" style="left:905px;top:595px">00000010</div>
<div class="t hx" style="left:975px;top:595px">63 68 6F 6F 73 65 31 2E 73 6E 64 <span class="dz">00</span> 79 61 79 61</div>
<div class="t hx" style="left:1318px;top:595px">cho</div>
<div class="t hx hb" style="left:905px;top:609px">00000020</div>
<div class="t hx" style="left:975px;top:609px">2E 62 6D 70 <span class="dz">00</span> 72 61 62 62 69 74 2E 62 6D 70 <span class="dz">00</span></div>
<div class="t hx" style="left:1318px;top:609px">.bm</div>

<div class="a" style="left:1339px;top:567px;width:13px;height:54px;background:#3c4045"></div>
<div class="a" style="left:1339px;top:567px;width:13px;height:13px;background:#3c4045;border:1px solid #5b5f64"></div>
<svg class="a" style="left:1341px;top:571px" width="8" height="5"><path d="M0 5L4 0.5L8 5z" fill="#d6d6d6"/></svg>
<div class="a" style="left:1339px;top:608px;width:13px;height:13px;background:#3c4045;border:1px solid #5b5f64"></div>
<svg class="a" style="left:1341px;top:612px" width="8" height="5"><path d="M0 0L4 4.5L8 0z" fill="#d6d6d6"/></svg>
<div class="a" style="left:1339px;top:581px;width:13px;height:26px;background:#43474c;border:1px solid #5b5f64"></div>
<div class="a" style="left:897px;top:622px;width:442px;height:13px;background:#3c4045"></div>
<div class="a" style="left:897px;top:622px;width:14px;height:13px;background:#3c4045;border:1px solid #5b5f64"></div>
<svg class="a" style="left:901px;top:624px" width="5" height="9"><path d="M5 0L0.5 4.5L5 9z" fill="#d6d6d6"/></svg>
<div class="a" style="left:1325px;top:622px;width:14px;height:13px;background:#3c4045;border:1px solid #5b5f64"></div>
<svg class="a" style="left:1330px;top:624px" width="5" height="9"><path d="M0 0L4.5 4.5L0 9z" fill="#d6d6d6"/></svg>
<div class="a" style="left:912px;top:622px;width:337px;height:13px;background:#43474c;border:1px solid #5b5f64"></div>
<div class="a" style="left:1339px;top:622px;width:13px;height:13px;background:#2e3236"></div>
<svg class="a" style="left:1118px;top:638px" width="17" height="2"><g fill="#8a8e92"><rect x="0" width="1.5" height="1.5"/><rect x="3" width="1.5" height="1.5"/><rect x="6" width="1.5" height="1.5"/><rect x="9" width="1.5" height="1.5"/><rect x="12" width="1.5" height="1.5"/><rect x="15" width="1.5" height="1.5"/></g></svg>
<div class="t dt" style="left:901px;top:646px">Story Teller Emulator</div>
<svg class="a" style="left:1326px;top:646px" width="26" height="12" viewBox="0 0 26 12">
 <g fill="none" stroke="#a09c96" stroke-width="0.85"><path d="M2 .5h7l1.5 1.5v7L9 10.5H2L.5 9V2z"/><path d="M2.5 4.5H6.5V8.5H2.5Z"/><path d="M4.5 4.5V2.5H8.5V6.5H6.5"/></g>
 <g fill="none" stroke="#a09c96" stroke-width="0.85"><path d="M16 .5h7l1.5 1.5v7L23 10.5h-7L14.5 9V2z"/><path d="M16.8 2.3l6.4 6.4M23.2 2.3l-6.4 6.4" stroke-width="1.5"/></g>
</svg>
<div class="a" style="left:964px;top:670px;width:322px;height:200px;background:#fff;overflow:hidden">
<svg class="a" style="left:0;top:0" width="322" height="200" viewBox="0 0 322 200"><path d="M73.5 199 L64 189 L47.4 180.7 L30.8 168.8 L20.8 157 L14.8 145 L14.2 132 L17.8 126 L20.2 119 L29.7 117.8 L38 121.4 L39.1 112 L40.3 107 L45.7 100
C53 87 61 78 70 70 C78 63 86 58 94.9 54.6 C103 51 112 48.2 121 48 C131 48 141 51 149.5 54.6 L166.7 61.9 L184.4 66.3 L191.5 63.7 L197.7 53 L199.4 47.7
L193.3 45.1 L175.6 37.1 L157.9 27.4 L142 16.8 L135.8 7.5 L158 7.3 L150.5 1.3 L161 0.6 L196.6 5.9 L218 11.3 L232.2 17.8 L241.7 25.5
L255.9 27.9 L267.8 30.8 L279.6 39.1 L289.1 52.2 L303.3 62.9 L308.7 70 L307.5 80.7 L302.2 87.8 L291.5 91.3 L279.6 94.9 L275 100 L272.5 104.7 L263 108.3 L252.3 107.1
L252.3 115.4 L252.9 130.8 L248.8 143.9 L244 152.2 L238.1 158.1 L232.2 167.6 L244 172.4 L261.8 175.9 L270.1 181.9 L267.8 186.6 L259.5 190.2 L244 192.5 L232.2 189 L202.5 187.8 L190.7 183 L178.8 187.8 L170.5 193.7 L171.7 199 Z" fill="#000"/><path d="M152 3 C165 5.5 182 9 196.6 13 C208 16 215 18 220.3 20.2 C226 23 231 25 234.5 27.3 C239 31 242 34 244 38" fill="none" stroke="#fff" stroke-width="2.6" stroke-linecap="round" stroke-linejoin="round"/><path d="M147.3 16.4 C160 23 175 30 184.7 34.4 C195 38.5 202 41 208.4 42.7 C220 45.5 228 46.5 236.9 47.4" fill="none" stroke="#fff" stroke-width="2.2" stroke-linecap="round" stroke-linejoin="round"/><path d="M169.3 19 L174 21 L178.8 23.7 L184 24.5 L189.5 28.5 L196 31 L202.5 35.6 L214 38 L227.4 41.5" fill="none" stroke="#fff" stroke-width="1.8" stroke-linecap="round" stroke-linejoin="round"/><path d="M175.6 17.7 C190 21 205 25 216 29.2" fill="none" stroke="#fff" stroke-width="1.4" stroke-linecap="round" stroke-linejoin="round"/><path d="M259 50.5 C262.5 47 268.5 48 269.5 54 C270 59.5 265 62.5 259.5 61" fill="none" stroke="#fff" stroke-width="3.6" stroke-linecap="round" stroke-linejoin="round"/><path d="M272.5 56.9 C280 60 288 64 295 67.6" fill="none" stroke="#fff" stroke-width="1.8" stroke-linecap="round" stroke-linejoin="round"/><path d="M272.5 72.4 C272.5 77 273 81 273.7 83 C275 86 277 88 279.6 89" fill="none" stroke="#fff" stroke-width="2.4" stroke-linecap="round" stroke-linejoin="round"/><path d="M223.9 56.9 L228.6 66.4 L226 69 L232.2 77.1 L236 78 L244 85.4 L250 86 L255.9 91.3 L262 89 L267.8 87.8" fill="none" stroke="#fff" stroke-width="2.8" stroke-linecap="round" stroke-linejoin="round"/><path d="M225 86.6 L229 90 L232.2 93.7 L234 97 L236.9 100" fill="none" stroke="#fff" stroke-width="2.2" stroke-linecap="round" stroke-linejoin="round"/><path d="M206 77.1 C208 84 210 92 213.2 100" fill="none" stroke="#fff" stroke-width="2.2" stroke-linecap="round" stroke-linejoin="round"/><path d="M184.7 87.8 C186.5 92 188.5 96 190.7 100" fill="none" stroke="#fff" stroke-width="1.8" stroke-linecap="round" stroke-linejoin="round"/><path d="M107 78 C116 84 124 91 130.5 99 L130.5 104.7 L145.9 115.4 L137.6 116.6 L130.5 123.7 L143.5 130.8 L136.4 141.5 L142.3 147.4 L135.2 151 C134 160 133 166 132.9 171.2 C130 178 126 183 121 187.8" fill="none" stroke="#fff" stroke-width="2.4" stroke-linecap="round" stroke-linejoin="round"/><path d="M170.5 100 C176 108 181 116 184.7 123.7 L188.3 140.3 L182.4 139.1 L180 152.2 L171.7 170 L165.7 167.6 L161 172.4 C155 178 150 183 142.3 189" fill="none" stroke="#fff" stroke-width="2.4" stroke-linecap="round" stroke-linejoin="round"/><path d="M166 94 C168 96 169.5 98 170.5 100" fill="none" stroke="#fff" stroke-width="2.0" stroke-linecap="round" stroke-linejoin="round"/><path d="M187.1 100 L196.6 117.8 L206 123.7 L201.3 134.4 L210.8 139.1 L202.5 147.4 L210.8 154.6 L201.3 168.8" fill="none" stroke="#fff" stroke-width="2.4" stroke-linecap="round" stroke-linejoin="round"/><path d="M183 88 C185 92 186 96 187.1 100" fill="none" stroke="#fff" stroke-width="2.0" stroke-linecap="round" stroke-linejoin="round"/><path d="M191.8 156.9 C188 165 185 172 181.2 178.3" fill="none" stroke="#fff" stroke-width="1.6" stroke-linecap="round" stroke-linejoin="round"/><path d="M206 78 C209 90 211 100 213.2 100 L219.1 111.9 L218 123.7 L244 114.2 L229.8 136.8" fill="none" stroke="#fff" stroke-width="2.2" stroke-linecap="round" stroke-linejoin="round"/><path d="M52.2 128.5 C58 118 66 108 74.7 101.2" fill="none" stroke="#fff" stroke-width="1.9" stroke-linecap="round" stroke-linejoin="round"/><path d="M59.3 134.4 C64 126 71 118 78.3 111.9" fill="none" stroke="#fff" stroke-width="1.9" stroke-linecap="round" stroke-linejoin="round"/><path d="M71.2 141.5 C75 134 80 127 85.4 121.4" fill="none" stroke="#fff" stroke-width="1.9" stroke-linecap="round" stroke-linejoin="round"/><path d="M83 149.8 C85 143 88 138 91.3 133.2" fill="none" stroke="#fff" stroke-width="1.9" stroke-linecap="round" stroke-linejoin="round"/><path d="M28.5 134.4 C33 136 36 138 39.1 140.3 C42 146 45 152 47.4 157 C52 166 57 175 62.9 184.2" fill="none" stroke="#fff" stroke-width="2.0" stroke-linecap="round" stroke-linejoin="round"/><path d="M27.3 147.4 C33 151 39 155 45.1 159.3" fill="none" stroke="#fff" stroke-width="1.9" stroke-linecap="round" stroke-linejoin="round"/><path d="M34.4 164.7 C40 167 45 169 51 171.2" fill="none" stroke="#fff" stroke-width="1.9" stroke-linecap="round" stroke-linejoin="round"/><path d="M92.5 194.9 C101 189 109 182 115 174.7" fill="none" stroke="#fff" stroke-width="1.9" stroke-linecap="round" stroke-linejoin="round"/></svg>
</div>
<div class="t dt" style="left:963px;top:878px">Commands</div>
<div class="grp" style="left:965px;top:894px;width:321px;height:101px"></div>
<div class="a" style="left:1019px;top:914px;width:60px;height:60px;border-radius:50%;background:linear-gradient(170deg,#a7b3c0,#96a3b0 55%,#8a97a4);box-shadow:0 0 0 1px #5a6068"></div>
<div class="a" style="left:1032px;top:956px;width:12px;height:12px;border-radius:50%;border:1px solid #d8dde2;background:#8b949d"></div>
<div class="btn" style="left:1129px;top:906px;width:144px;height:20px"></div>
<div class="t bl" style="left:1129px;top:910px;width:144px;text-align:center">Ok</div>
<div class="btn" style="left:1129px;top:934px;width:144px;height:20px"></div>
<div class="t bl" style="left:1129px;top:938px;width:144px;text-align:center">Home</div>
<div class="btn" style="left:1129px;top:962px;width:144px;height:20px"></div>
<div class="t bl" style="left:1129px;top:966px;width:144px;text-align:center">Pause</div>
<svg class="a" style="left:1341px;top:1014px" width="13" height="13"><g fill="#7c8085"><rect x="9" y="0" width="2.5" height="2.5"/><rect x="6" y="3" width="2.5" height="2.5"/><rect x="9" y="3" width="2.5" height="2.5"/><rect x="3" y="6" width="2.5" height="2.5"/><rect x="6" y="6" width="2.5" height="2.5"/><rect x="9" y="6" width="2.5" height="2.5"/><rect x="0" y="9" width="2.5" height="2.5"/><rect x="3" y="9" width="2.5" height="2.5"/><rect x="6" y="9" width="2.5" height="2.5"/><rect x="9" y="9" width="2.5" height="2.5"/></g></svg>
</body></html>
